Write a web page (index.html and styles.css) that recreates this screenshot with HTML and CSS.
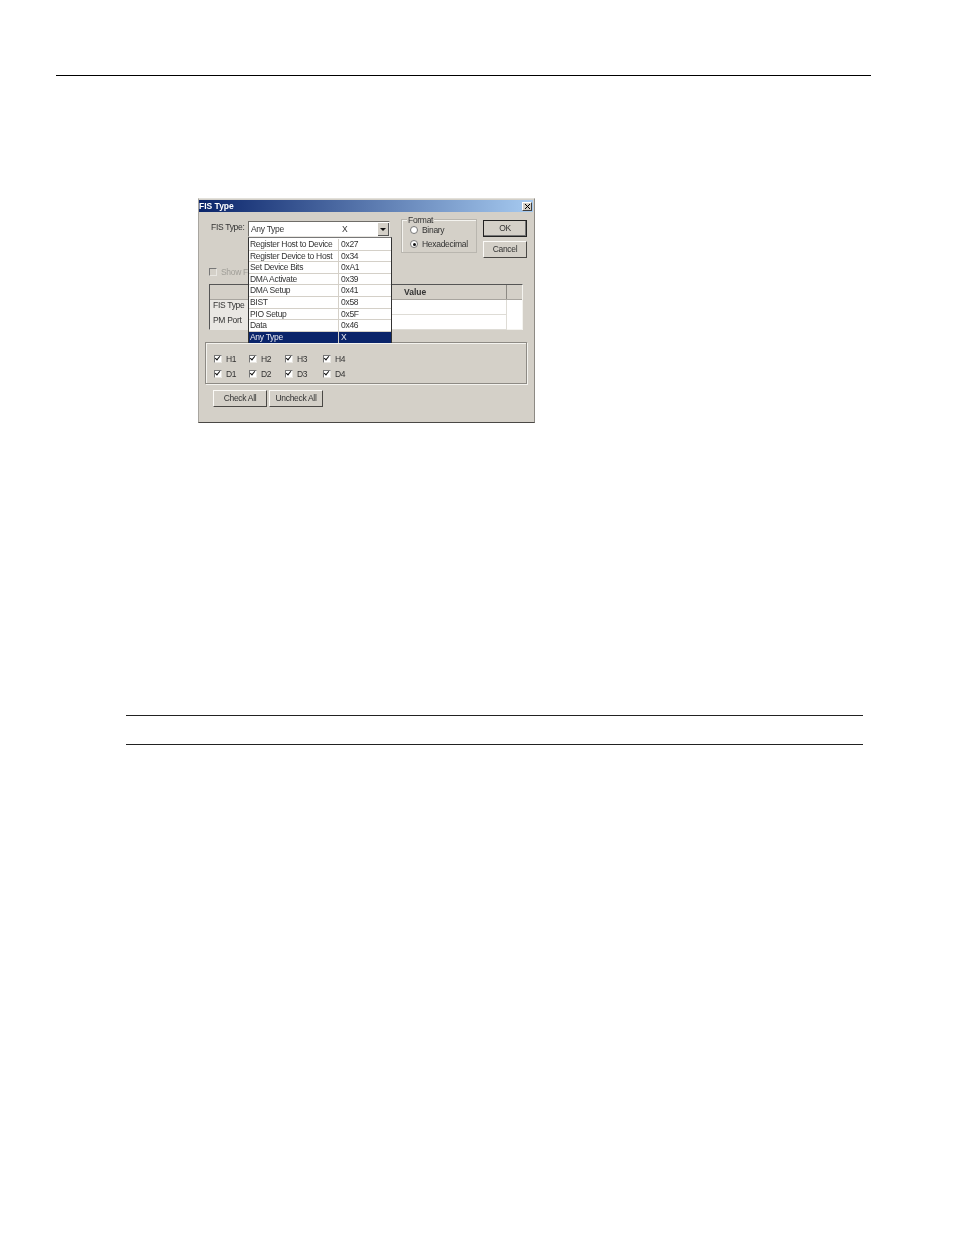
FILE: index.html
```html
<!DOCTYPE html>
<html lang="en">
<head>
    <meta charset="UTF-8">
    <title>FIS Type</title>
    <link rel="stylesheet" href="styles.css">
</head>
<body>
    <div class="header-rule"></div>
    <div class="dialog">
        <div class="title-bar">
            <span>FIS Type</span>
            <span class="close-btn">
                <svg width="7" height="7" viewBox="0 0 7 7"><path d="M0 0L7 7M7 0L0 7" stroke="#000" stroke-width="1.4"/></svg>
            </span>
        </div>
        <div class="top-row">
            <label class="fis-label">FIS Type:</label>
            <div class="combo">
                <span class="combo-name">Any Type</span>
                <span class="combo-val">X</span>
                <span class="combo-arrow"></span>
            </div>
            <div class="format">
                <span class="legend">Format</span>
                <div class="radio-row"><span class="radio"></span>Binary</div>
                <div class="radio-row"><span class="radio on"></span>Hexadecimal</div>
            </div>
            <div class="ok-cancel">
                <button class="btn default">OK</button>
                <button class="btn">Cancel</button>
            </div>
        </div>
        <div class="show-row"><span class="check off"></span>Show F</div>
        <div class="grid">
            <div class="grid-head">
                <div class="head-name"></div>
                <div class="head-value">Value</div>
                <div class="head-end"></div>
            </div>
            <div class="grid-row">
                <div class="row-name">FIS Type</div>
                <div class="row-cell"></div>
            </div>
            <div class="grid-row">
                <div class="row-name">PM Port</div>
                <div class="row-cell"></div>
            </div>
        </div>
        <div class="checks">
            <div class="check-item"><span class="check"></span>H1</div>
            <div class="check-item"><span class="check"></span>H2</div>
            <div class="check-item"><span class="check"></span>H3</div>
            <div class="check-item"><span class="check"></span>H4</div>
            <div class="check-item"><span class="check"></span>D1</div>
            <div class="check-item"><span class="check"></span>D2</div>
            <div class="check-item"><span class="check"></span>D3</div>
            <div class="check-item"><span class="check"></span>D4</div>
        </div>
        <div class="bottom-buttons">
            <button class="btn wide">Check All</button>
            <button class="btn wide">Uncheck All</button>
        </div>
        <!-- open dropdown sits over the grid -->
        <div class="dropdown">
            <div class="drop-row"><span>Register Host to Device</span><span>0x27</span></div>
            <div class="drop-row"><span>Register Device to Host</span><span>0x34</span></div>
            <div class="drop-row"><span>Set Device Bits</span><span>0xA1</span></div>
            <div class="drop-row"><span>DMA Activate</span><span>0x39</span></div>
            <div class="drop-row"><span>DMA Setup</span><span>0x41</span></div>
            <div class="drop-row"><span>BIST</span><span>0x58</span></div>
            <div class="drop-row"><span>PIO Setup</span><span>0x5F</span></div>
            <div class="drop-row"><span>Data</span><span>0x46</span></div>
            <div class="drop-row selected"><span>Any Type</span><span>X</span></div>
        </div>
    </div>
    <div class="rule first"></div>
    <div class="rule second"></div>
</body>
</html>
```

FILE: styles.css
```css
body {
    margin: 0;
    background-color: #fff;
    font-family: "Liberation Sans", Arial, sans-serif;
    height: 1235px;
    overflow: hidden;
}
.header-rule {
    height: 1px;
    background-color: #000;
    margin: 75px 83px 0 56px;
}
.rule {
    height: 1px;
    background-color: #222;
    margin: 0 91px 0 126px;
}
.rule.first {
    margin-top: 292px;
}
.rule.second {
    margin-top: 28px;
}
.dialog {
    position: relative;
    box-sizing: border-box;
    width: 337px;
    height: 225px;
    margin: 122px 0 0 198px;
    background-color: #d4d0c8;
    border: 1px solid #a8a59f;
    border-right-color: #8d8a84;
    border-bottom-color: #4a4845;
    border-top-color: #e2e0da;
    font-size: 8.5px;
    letter-spacing: -0.3px;
    color: #333;
    filter: blur(0.4px);
}
.title-bar {
    display: flex;
    justify-content: space-between;
    align-items: center;
    height: 12px;
    margin: 1px 1px 0 0;
    padding: 0 1px 0 0;
    background: linear-gradient(to right, #0a246a, #a6caf0);
    color: #fff;
    font-size: 8.5px;
    font-weight: bold;
    letter-spacing: 0;
}
.close-btn {
    display: flex;
    align-items: center;
    justify-content: center;
    width: 10px;
    height: 9px;
    background-color: #d4d0c8;
    border: 1px solid;
    border-color: #fff #404040 #404040 #fff;
    box-sizing: border-box;
}
.close-btn svg {
    width: 5px;
    height: 5px;
}
.top-row {
    display: flex;
    align-items: flex-start;
    margin-top: 6px;
    padding-left: 12px;
}
.fis-label {
    width: 37px;
    margin-top: 4px;
}
.combo {
    display: flex;
    align-items: center;
    box-sizing: border-box;
    width: 142px;
    height: 16px;
    margin-top: 3px;
    background-color: #fff;
    border: 1px solid;
    border-color: #6f6d68 #e8e6e1 #e8e6e1 #6f6d68;
}
.combo-name {
    width: 91px;
    padding-left: 2px;
}
.combo-val {
    flex: 1;
}
.combo-arrow {
    position: relative;
    width: 10px;
    height: 12px;
    background-color: #d4d0c8;
    border-right: 1px solid #555;
    border-bottom: 1px solid #555;
}
.combo-arrow::after {
    content: "";
    position: absolute;
    left: 2px;
    top: 5px;
    border: 3px solid transparent;
    border-top-color: #111;
    border-bottom: 0;
}
.format {
    position: relative;
    box-sizing: border-box;
    width: 76px;
    height: 34px;
    margin: 1px 0 0 11px;
    padding: 3px 0 0 8px;
    border: 1px solid #b9b6af;
    box-shadow: inset 1px 1px 0 #f4f3ef;
}
.legend {
    position: absolute;
    left: 5px;
    top: -4px;
    padding: 0 1px;
    line-height: 8px;
    background-color: #d4d0c8;
}
.radio-row {
    display: flex;
    align-items: center;
    gap: 4px;
    height: 14px;
}
.radio {
    position: relative;
    box-sizing: border-box;
    width: 8px;
    height: 8px;
    border-radius: 50%;
    background-color: #fff;
    border: 1px solid #777;
}
.radio.on::after {
    content: "";
    position: absolute;
    left: 1.5px;
    top: 1.5px;
    width: 3px;
    height: 3px;
    border-radius: 50%;
    background-color: #111;
}
.ok-cancel {
    display: flex;
    flex-direction: column;
    gap: 4px;
    margin-left: 6px;
    padding-top: 2px;
}
.btn {
    box-sizing: border-box;
    width: 44px;
    height: 17px;
    padding: 0 0 2px;
    background-color: #d4d0c8;
    border: 1px solid;
    border-color: #fbfaf7 #4a4845 #4a4845 #fbfaf7;
    font-family: inherit;
    font-size: 8.5px;
    letter-spacing: inherit;
    color: #333;
}
.btn.default {
    border: 1px solid #222;
    box-shadow: inset -1px -1px 0 #777;
}
.btn.wide {
    width: 54px;
}
.show-row {
    display: flex;
    align-items: center;
    gap: 4px;
    margin: 8px 0 0 10px;
    height: 12px;
    color: #a09e98;
}
.check {
    position: relative;
    flex: none;
    box-sizing: border-box;
    width: 8px;
    height: 8px;
    background-color: #fff;
    border: 1px solid;
    border-color: #777 #e8e6e1 #e8e6e1 #777;
}
.check::after {
    content: "";
    position: absolute;
    left: 1px;
    top: -1px;
    width: 2px;
    height: 4px;
    border: solid #111;
    border-width: 0 1.5px 1.5px 0;
    transform: rotate(40deg);
}
.check.off {
    background-color: #d4d0c8;
}
.check.off::after {
    display: none;
}
.grid {
    box-sizing: border-box;
    width: 314px;
    height: 46px;
    margin: 6px 0 0 10px;
    background-color: #fff;
    border: 1px solid;
    border-color: #555 #f4f3ef #f4f3ef #555;
}
.grid-head {
    display: flex;
    height: 15px;
    background-color: #d4d0c8;
    border-bottom: 1px solid #a8a59f;
    box-sizing: border-box;
}
.head-name {
    width: 194px;
}
.head-value {
    flex: 1;
    font-weight: bold;
    letter-spacing: 0;
    line-height: 14px;
    border-right: 1px solid #8d8a84;
}
.head-end {
    width: 15px;
}
.grid-row {
    display: flex;
    height: 15px;
}
.row-name {
    box-sizing: border-box;
    width: 38px;
    padding-left: 3px;
    line-height: 10px;
    background-color: #e9e7e3;
}
.row-cell {
    flex: 1;
    margin-right: 15px;
    border-bottom: 1px solid #dedcd6;
    border-right: 1px solid #dedcd6;
    background-color: #fff;
}
.checks {
    display: grid;
    grid-template-columns: 35px 36px 38px 30px;
    grid-template-rows: 15px 15px;
    align-items: center;
    box-sizing: border-box;
    width: 322px;
    height: 42px;
    margin: 12px 0 0 6px;
    padding: 8px 0 0 8px;
    border: 1px solid #8d8a84;
    box-shadow: inset 1px 1px 0 #f4f3ef, 1px 1px 0 #f4f3ef;
}
.check-item {
    display: flex;
    align-items: center;
    gap: 4px;
}
.bottom-buttons {
    display: flex;
    gap: 2px;
    margin: 6px 0 0 14px;
}
.dropdown {
    position: absolute;
    left: 49px;
    top: 38px;
    box-sizing: border-box;
    width: 144px;
    height: 106px;
    padding-top: 1px;
    background-color: #fff;
    border: 1px solid #333;
    border-top-color: #777;
}
.drop-row {
    display: grid;
    grid-template-columns: 88px 1fr;
    height: 11.6px;
    line-height: 11px;
    box-sizing: border-box;
    border-bottom: 1px solid #d4d0c8;
    padding-left: 1px;
}
.drop-row span + span {
    border-left: 1px solid #d4d0c8;
    padding-left: 2px;
}
.drop-row.selected {
    background-color: #0a246a;
    color: #e8e8f0;
    border-bottom: 0;
}
```
